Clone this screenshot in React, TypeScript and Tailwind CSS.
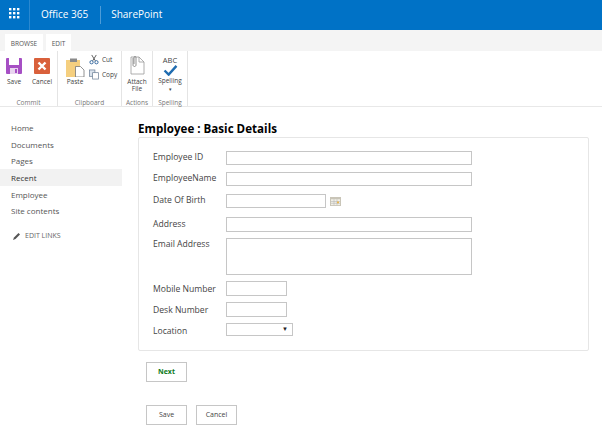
import React from "react";

const font = { fontFamily: '"Open Sans", "Liberation Sans", sans-serif' };

function Waffle() {
  return (
    <svg width="11" height="11" viewBox="0 0 11 11" fill="#fff">
      {[0, 4, 8].flatMap((y) =>
        [0, 4, 8].map((x) => <rect key={`${x}-${y}`} x={x} y={y} width="2.4" height="2.4" />)
      )}
    </svg>
  );
}

function Field({ label, mt, labelCls = "", children }: { label: string; mt: string; labelCls?: string; children: React.ReactNode }) {
  return (
    <div className={`flex ${mt}`}>
      <div className={`w-[73px] shrink-0 text-[8.6px] leading-[13px] text-[#444] ${labelCls}`}>{label}</div>
      {children}
    </div>
  );
}

const inputCls = "border border-[#c6c6c6] bg-white";

function GroupLabel({ children }: { children: React.ReactNode }) {
  return <div className="pt-[2px] text-center leading-[6px] text-[#777]">{children}</div>;
}

export default function App() {
  return (
    <div className="relative h-[434px] w-[602px] overflow-hidden bg-white" style={font}>
      <header className="flex h-[30px] items-center bg-[#0072c6] text-white">
        <div className="flex h-full w-[30px] items-center justify-center border-r border-[#2a88d0] pb-[3px]">
          <Waffle />
        </div>
        <span className="ml-[11px] pb-[1px] text-[10px]">Office 365</span>
        <div className="ml-[12px] h-[18px] w-px bg-[#4d9cd8]" />
        <span className="ml-[10px] pb-[1px] text-[10px]">SharePoint</span>
      </header>

      <div className="flex h-[21px] items-end gap-[3px] bg-[#f4f4f4] pl-[5px]">
        <div className="flex h-[17px] w-[38px] items-center justify-center bg-white pt-[2px] text-[6.5px] text-[#555]">BROWSE</div>
        <div className="flex h-[17px] w-[25px] items-center justify-center bg-white pt-[2px] text-[6.5px] text-[#555]">EDIT</div>
      </div>

      <div className="flex h-[56px] border-b border-[#e8e8e8] bg-white text-[6.5px] leading-[8px] text-[#444]">
        <div className="flex w-[58px] flex-col border-r border-[#e4e4e4]">
          <div className="flex flex-1 pl-[6px] pt-[7px]">
            <div className="flex w-[16px] flex-col items-center">
              <svg width="16" height="16" viewBox="0 0 16 16">
                <rect width="16" height="16" fill="#a64fc4" rx="1" />
                <rect x="3" y="0" width="10" height="7" fill="#fff" />
                <rect x="4" y="10" width="8" height="6" fill="#e8d4ef" />
                <rect x="9" y="11" width="2" height="4" fill="#a64fc4" />
              </svg>
              <span className="mt-[4px]">Save</span>
            </div>
            <div className="ml-[7px] flex w-[26px] flex-col items-center">
              <svg width="16" height="16" viewBox="0 0 16 16">
                <rect width="16" height="16" fill="#d9603b" rx="1" />
                <path d="M4.5 4.5 L11.5 11.5 M11.5 4.5 L4.5 11.5" stroke="#fff" strokeWidth="2.4" />
              </svg>
              <span className="mt-[4px]">Cancel</span>
            </div>
          </div>
          <GroupLabel>Commit</GroupLabel>
        </div>

        <div className="flex w-[64px] flex-col border-r border-[#e4e4e4]">
          <div className="flex flex-1 pl-[7px] pt-[5px]">
            <div className="flex w-[20px] flex-col items-center">
              <svg width="19" height="19" viewBox="0 0 19 19" className="mt-[2px]">
                <rect x="0" y="2" width="14" height="17" fill="#f5cf7f" />
                <rect x="4" y="0.5" width="7" height="3.5" fill="#8a8a8a" />
                <path d="M9.5 8.5h5l3.5 3.5v7h-8.5z" fill="#fff" stroke="#777" strokeWidth="0.8" />
              </svg>
              <span className="mt-[1px]">Paste</span>
            </div>
            <div className="ml-[4px] -mt-[2px] flex flex-col gap-[4px]">
              <div className="flex items-center gap-[3px]">
                <svg width="10" height="11" viewBox="0 0 11 11" fill="none" stroke="#2a6099" strokeWidth="1">
                  <path d="M3 0.5 L7 7 M8 0.5 L4 7" stroke="#555" />
                  <circle cx="2.8" cy="8.5" r="1.8" />
                  <circle cx="8.2" cy="8.5" r="1.8" />
                </svg>
                <span>Cut</span>
              </div>
              <div className="flex items-center gap-[3px]">
                <svg width="10" height="11" viewBox="0 0 11 11" fill="#fff" stroke="#6b7f96" strokeWidth="0.8">
                  <rect x="0.5" y="0.5" width="6" height="7" fill="#dbe4ee" />
                  <rect x="4" y="3.5" width="6.5" height="7" />
                </svg>
                <span>Copy</span>
              </div>
            </div>
          </div>
          <GroupLabel>Clipboard</GroupLabel>
        </div>

        <div className="flex w-[31px] flex-col border-r border-[#e4e4e4]">
          <div className="flex flex-1 flex-col items-center pt-[4px] leading-[7px]">
            <svg width="16" height="20" viewBox="0 0 16 20" fill="#fff" stroke="#999" strokeWidth="0.8">
              <path d="M2 2h8l5 5v12H2z" />
              <path d="M10 2v5h5" fill="none" />
              <path d="M4 3v7c0 2 3 2 3 0V2.5c0-1.400-2-1.400-2 0V9" fill="none" stroke="#777" />
            </svg>
            <span className="mt-[3px]">Attach</span>
            <span>File</span>
          </div>
          <GroupLabel>Actions</GroupLabel>
        </div>

        <div className="flex w-[35px] flex-col border-r border-[#e4e4e4]">
          <div className="flex flex-1 flex-col items-center pt-[5px] leading-[7px]">
            <span className="text-[7.5px] leading-[9px] text-[#444]">ABC</span>
            <svg width="15" height="11" viewBox="0 0 16 12" fill="none" stroke="#1f6cb0" strokeWidth="2.6">
              <path d="M1.500 6 L6 10.500 L14.500 1" />
            </svg>
            <span className="mt-[1px]">Spelling</span>
            <span className="mt-[2px] text-[5px]">▾</span>
          </div>
          <GroupLabel>Spelling</GroupLabel>
        </div>
      </div>

      <div className="flex">
        <nav className="w-[122px] shrink-0 pt-[12px] text-[8px] text-[#555]">
          {["Home", "Documents", "Pages", "Recent", "Employee", "Site contents"].map((t) => (
            <div key={t} className={`flex h-[16.7px] items-center pl-[11px] pt-[1px] ${t === "Recent" ? "bg-[#f2f2f2] text-[#333]" : ""}`}>
              {t}
            </div>
          ))}
          <div className="mt-[12px] flex items-center pl-[13px] text-[7px] text-[#666]">
            <svg width="8" height="8" viewBox="0 0 8 8" fill="#555"><path d="M0 8 L1 5.500 L5.500 1 L7 2.500 L2.500 7 Z" /></svg>
            <span className="ml-[4px]">EDIT LINKS</span>
          </div>
        </nav>

        <main className="ml-[16px] w-[451px] pt-[14px]">
          <h1 className="text-[11.6px] font-bold leading-[16px] text-black">Employee : Basic Details</h1>
          <section className="h-[214px] rounded-[2px] border border-[#e6e6e6] px-[14px] pt-[13px]">
            <Field label="Employee ID" mt="mt-0"><div className={`${inputCls} h-[14px] w-[246px]`} /></Field>
            <Field label="EmployeeName" mt="mt-[7px]"><div className={`${inputCls} h-[14px] w-[246px]`} /></Field>
            <Field label="Date Of Birth" mt="mt-[8px]">
              <div className={`${inputCls} h-[14px] w-[100px]`} />
              <svg width="11" height="9" viewBox="0 0 11 10" className="ml-[4px] mt-[3px]" preserveAspectRatio="none">
                <rect width="11" height="10" fill="#c9c5b8" />
                <rect x="1" y="2.500" width="9" height="6.500" fill="#f1efe6" />
                <path d="M1 5h9M1 7h9M4 2.500v6.500M7 2.500v6.500" stroke="#b5b5b5" strokeWidth="0.6" />
                <rect x="7" y="5" width="2" height="2" fill="#e9b64f" />
              </svg>
            </Field>
            <Field label="Address" mt="mt-[9px]" labelCls="pt-[1px]"><div className={`${inputCls} h-[15px] w-[246px]`} /></Field>
            <Field label="Email Address" mt="mt-[6px]"><div className={`${inputCls} h-[37px] w-[246px]`} /></Field>
            <Field label="Mobile Number" mt="mt-[6px]" labelCls="pt-[2px]"><div className={`${inputCls} h-[15px] w-[61px]`} /></Field>
            <Field label="Desk Number" mt="mt-[6px]" labelCls="pt-[2px]"><div className={`${inputCls} h-[15px] w-[61px]`} /></Field>
            <Field label="Location" mt="mt-[6px]" labelCls="pt-[2px]">
              <div className={`${inputCls} flex h-[13px] w-[67px] items-center justify-end pr-[4px] text-[6px] text-[#222]`}>▼</div>
            </Field>
          </section>
          <div className="ml-[8px] mt-[11px] flex h-[20px] w-[41px] items-center justify-center border border-[#c6c6c6] pt-[1px] text-[7px] font-bold text-[#0d7a1a]">Next</div>
          <div className="ml-[8px] mt-[23px] flex gap-[9px]">
            <div className="flex h-[20px] w-[41px] items-center justify-center border border-[#c6c6c6] pt-[1px] text-[7px] text-[#444]">Save</div>
            <div className="flex h-[20px] w-[41px] items-center justify-center border border-[#c6c6c6] pt-[1px] text-[7px] text-[#444]">Cancel</div>
          </div>
        </main>
      </div>
    </div>
  );
}
